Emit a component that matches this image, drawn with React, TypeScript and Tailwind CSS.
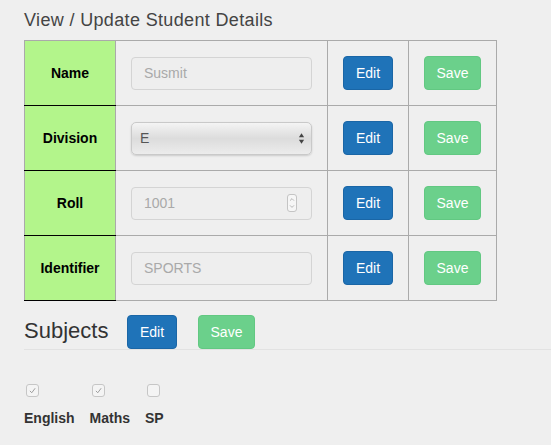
import { ChevronUp, ChevronDown } from "lucide-react"

const rows = [
  { label: "Name", kind: "text", value: "Susmit" },
  { label: "Division", kind: "select", value: "E" },
  { label: "Roll", kind: "number", value: "1001" },
  { label: "Identifier", kind: "text", value: "SPORTS" },
]

const subjects = [
  { name: "English", checked: true },
  { name: "Maths", checked: true },
  { name: "SP", checked: false },
]

function EditButton() {
  return (
    <button className="h-[34px] w-[50px] rounded-[4px] bg-[#1f73b8] border border-[#1a66a6] text-white text-[14px]">
      Edit
    </button>
  )
}

function SaveButton() {
  return (
    <button className="h-[34px] w-[57px] rounded-[4px] bg-[#6bd08b] border border-[#62c882] text-white text-[14px]">
      Save
    </button>
  )
}

function Field({ kind, value }: { kind: string; value: string }) {
  if (kind === "select") {
    return (
      <div className="h-[33px] w-[181px] rounded-[5px] border border-[#c9c9c9] bg-gradient-to-b from-[#f4f4f4] via-[#dcdcdc] to-[#ececec] shadow-[0_1px_2px_rgba(0,0,0,0.15)] flex items-center justify-between pl-[8px] pr-[6px]">
        <span className="text-[14px] text-[#555]">{value}</span>
        <svg viewBox="0 0 8 14" className="w-[7px] h-[13px]">
          <path d="M4 1 L7 5.5 L1 5.5 Z" fill="#444" />
          <path d="M4 13 L7 8.5 L1 8.5 Z" fill="#444" />
        </svg>
      </div>
    )
  }
  return (
    <div className="h-[33px] w-[181px] rounded-[4px] border border-[#d4d4d4] bg-[#eeeeee] flex items-center justify-between pl-[12px] pr-[14px]">
      <span className="text-[14px] text-[#a9a9a9]">{value}</span>
      {kind === "number" && (
        <span className="flex flex-col items-center rounded-[3px] border border-[#c4c4c4] bg-[#f6f6f6] w-[10px] h-[18px] justify-center">
          <ChevronUp className="w-[8px] h-[7px] text-[#888]" strokeWidth={2} />
          <ChevronDown className="w-[8px] h-[7px] text-[#888]" strokeWidth={2} />
        </span>
      )}
    </div>
  )
}

export default function App() {
  return (
    <div className="min-h-[445px] bg-[#efefef] font-['Liberation_Sans',Arial,sans-serif] pl-[24px]">
      <h3 className="pt-[9px] text-[18px] leading-[22px] tracking-[0.35px] text-[#444]">
        View / Update Student Details
      </h3>

      <table className="mt-[9px] border-collapse">
        <tbody>
          {rows.map((row, i) => (
            <tr key={i} className="h-[65px]">
              <td
                className={`w-[91px] bg-[#b3f58b] border-l border-l-[#aaa] border-r border-r-[#aaa] border-b border-b-black text-center text-[14px] font-bold text-black ${i === 0 ? "border-t border-t-[#aaa]" : ""}`}
              >
                {row.label}
              </td>
              <td className="w-[212px] border border-[#aaa] pl-[15px]">
                <Field kind={row.kind} value={row.value} />
              </td>
              <td className="w-[81px] border border-[#aaa] pl-[15px]">
                <EditButton />
              </td>
              <td className="w-[88px] border border-[#aaa] pl-[15px]">
                <SaveButton />
              </td>
            </tr>
          ))}
        </tbody>
      </table>

      <div className="mt-[14px] flex items-center h-[34px]">
        <h2 className="text-[22px] leading-[26px] text-[#333] w-[103px] -mt-[3px]">Subjects</h2>
        <EditButton />
        <div className="w-[21px]" />
        <SaveButton />
      </div>
      <div className="h-px bg-[#e2e2e2]" />

      <div className="flex gap-[15px] mt-[34px]">
        {subjects.map((s) => (
          <div key={s.name} className="flex flex-col items-start">
            <span className="ml-[2px] w-[13px] h-[13px] rounded-[3px] border border-[#c6c6c6] bg-[#f4f4f4] flex items-center justify-center">
              {s.checked && (
                <svg viewBox="0 0 12 12" className="w-[9px] h-[9px]">
                  <path d="M2.5 6.5 L5 9 L9.5 3" fill="none" stroke="#9a9a9a" strokeWidth="1.3" />
                </svg>
              )}
            </span>
            <span className="mt-[13px] text-[14px] leading-[16px] font-bold text-[#333]">{s.name}</span>
          </div>
        ))}
      </div>
    </div>
  )
}
